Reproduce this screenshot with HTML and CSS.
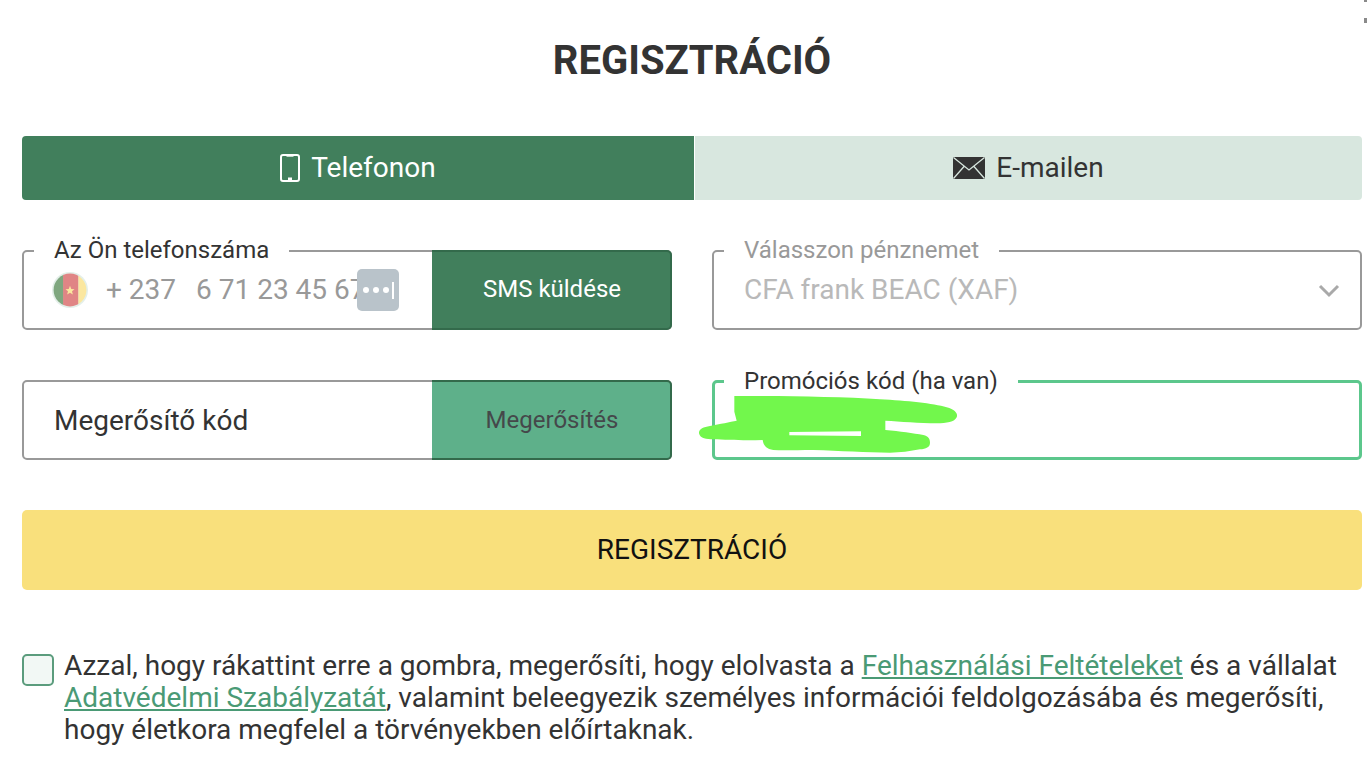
FILE: index.html
```html
<!DOCTYPE html>
<html lang="hu">
<head>
<meta charset="utf-8">
<title>Regisztráció</title>
<link rel="stylesheet" href="styles.css">
</head>
<body>
<div class="corner-mark corner-mark-a"></div>
<div class="corner-mark corner-mark-b"></div>
<main class="page">
  <h1 class="title">REGISZTRÁCIÓ</h1>
  <div class="tabs">
    <button class="tab tab-active" type="button">
      <svg class="icon-phone" viewBox="0 0 20 28" aria-hidden="true"><rect x="1" y="1" width="18" height="26" rx="2" fill="none" stroke="currentColor" stroke-width="2"/><rect x="6.5" y="1.5" width="7" height="1.2" fill="currentColor"/><rect x="8" y="23.5" width="4" height="3" fill="currentColor"/></svg>
      <span>Telefonon</span>
    </button>
    <button class="tab tab-idle" type="button">
      <svg class="icon-mail" viewBox="0 0 32 22" aria-hidden="true"><rect width="32" height="22" rx="1" fill="#333"/><path d="M0.5 0.5 L16 13 L31.5 0.5 M0.5 21.5 L11 9.5 M31.5 21.5 L21 9.5" fill="none" stroke="#d8e7df" stroke-width="1.3"/></svg>
      <span>E-mailen</span>
    </button>
  </div>
  <div class="form-grid">
    <div class="field">
      <span class="field-label">Az Ön telefonszáma</span>
      <div class="phone-value">
        <svg class="flag" viewBox="0 0 34 34" aria-hidden="true"><circle cx="17" cy="17" r="17" fill="#e3efe9"/><clipPath id="fc"><circle cx="17" cy="17" r="15.5"/></clipPath><g clip-path="url(#fc)"><rect width="11" height="34" x="0" fill="#7fa77f"/><rect width="14.5" height="34" x="10.5" fill="#e08585"/><rect width="10" height="34" x="25" fill="#fbe79f"/></g><path d="M17 13 L18.2 16 L21.3 16.2 L18.9 18.2 L19.7 21.2 L17 19.5 L14.3 21.2 L15.1 18.2 L12.7 16.2 L15.8 16 Z" fill="#fbe79f"/></svg>
        <span class="dial">+ 237</span>
        <span class="number">6 71 23 45 67</span>
      </div>
      <div class="keyboard-tile" aria-hidden="true"><i></i><i></i><i></i><b></b></div>
      <button class="side-btn side-btn-dark" type="button">SMS küldése</button>
    </div>
    <div class="field field-muted">
      <span class="field-label field-label-muted">Válasszon pénznemet</span>
      <div class="select-value">CFA frank BEAC (XAF)</div>
      <svg class="chevron" viewBox="0 0 22 14" aria-hidden="true"><path d="M2 2 L11 11 L20 2" fill="none" stroke="#a9a9a9" stroke-width="3"/></svg>
    </div>
    <div class="field">
      <div class="code-value">Megerősítő kód</div>
      <button class="side-btn side-btn-light" type="button">Megerősítés</button>
    </div>
    <div class="field field-promo">
      <span class="field-label">Promóciós kód (ha van)</span>
      <svg class="scribble" viewBox="0 0 960 300" aria-hidden="true"><path d="M163 78 C300 78 480 80 600 88 C680 92 760 100 800 112 C828 120 834 132 830 142 C824 156 800 160 770 160 C720 160 660 154 616 152 L616 180 C660 184 700 190 730 195 C746 198 750 208 750 218 C750 232 738 236 720 238 C690 244 660 248 630 248 C560 248 480 242 400 240 C350 240 310 242 280 240 C262 238 250 228 248 210 C200 212 140 210 100 208 C80 208 60 206 57 190 C56 176 70 172 90 168 C120 162 150 156 170 152 L163 125 Z" fill="#72f74c"/><path d="M328 186 L543 184 L543 198 L328 196 Z" fill="#fff"/></svg>
    </div>
  </div>
  <button class="submit" type="button">REGISZTRÁCIÓ</button>
  <div class="consent">
    <span class="checkbox"></span>
    <p class="consent-text">Azzal, hogy rákattint erre a gombra, megerősíti, hogy elolvasta a <a href="#">Felhasználási Feltételeket</a> és a vállalat <a href="#">Adatvédelmi Szabályzatát</a>, valamint beleegyezik személyes információi feldolgozásába és megerősíti, hogy életkora megfelel a törvényekben előírtaknak.</p>
  </div>
</main>
</body>
</html>
```
FILE: styles.css
```css
* { box-sizing: border-box; }
html, body { margin: 0; height: 100%; background: #fff; overflow: hidden; }
body { font-family: Roboto, "Liberation Sans", sans-serif; color: #333; position: relative; }
.page { padding: 0 5px 0 22px; display: flex; flex-direction: column; }
.title { margin: 0; height: 136px; padding-top: 39px; text-align: center; font-size: 40px; line-height: 44px; font-weight: 700; color: #333; }
.tabs { display: grid; grid-template-columns: 672px 667px; gap: 1px; height: 64px; }
.tab { border: 0; border-radius: 0; display: flex; align-items: center; justify-content: center; gap: 11px; font: 400 28px/32px Roboto, sans-serif; padding: 0; }
.tab-active { background: #417f5c; color: #fff; border-radius: 4px 0 0 4px; }
.tab-idle { background: #d8e7df; color: #333; border-radius: 0 4px 4px 0; }
.icon-phone { width: 20px; height: 28px; }
.icon-mail { width: 32px; height: 22px; }
.form-grid { display: grid; grid-template-columns: 650px 650px; column-gap: 40px; row-gap: 50px; margin-top: 50px; }
.field { position: relative; height: 80px; border: 2px solid #999; border-radius: 5px; display: flex; align-items: center; background: #fff; }
.field-promo { border: 3px solid #5cc78c; }
.field-label { position: absolute; left: 10px; top: -15px; padding: 0 20px; background: #fff; font-size: 24px; line-height: 26px; color: #333; }
.field-promo .field-label { left: 9px; top: -15px; }
.field-label-muted { color: #999; }
.phone-value { display: flex; align-items: center; width: 408px; padding-left: 28px; font-size: 28px; color: #999; overflow: hidden; }
.flag { width: 36px; height: 36px; flex: none; }
.dial { margin-left: 18px; padding-bottom: 2px; }
.number { margin-left: 20px; padding-bottom: 2px; white-space: nowrap; }
.keyboard-tile { position: absolute; left: 333px; top: 17px; width: 42px; height: 42px; border-radius: 5px; background: #b9c3ca; display: flex; align-items: center; justify-content: center; gap: 4px; }
.keyboard-tile i { width: 6px; height: 6px; border-radius: 50%; background: #fff; }
.keyboard-tile b { width: 2px; height: 17px; background: #fff; margin-left: -1px; }
.side-btn { align-self: stretch; margin: -2px -2px -2px auto; width: 240px; border: 2px solid #336a4b; border-left: 0; border-radius: 0 5px 5px 0; font: 400 24px/28px Roboto, sans-serif; padding: 0 0 0 2px; }
.side-btn-dark { background: #417f5c; color: #fff; padding-bottom: 2px; }
.side-btn-light { background: #5eb08a; color: #45484a; }
.select-value { padding: 0 0 2px 30px; font-size: 28px; color: #b9b9b9; }
.chevron { position: absolute; right: 20px; top: 32px; width: 22px; height: 14px; }
.code-value { padding-left: 30px; font-size: 28px; color: #333; }
.scribble { position: absolute; left: -35px; top: -13px; width: 320px; height: 100px; }
.submit { margin-top: 50px; height: 80px; width: 100%; border: 0; border-radius: 5px; background: #f9e07c; color: #111; font: 400 28px/32px Roboto, sans-serif; padding: 0; }
.consent { display: flex; gap: 10px; margin-top: 60px; }
.checkbox { flex: none; width: 32px; height: 32px; margin-top: 4px; border: 2px solid #5b9c7d; border-radius: 5px; background: #f2f8f5; }
.consent-text { margin: 0; font-size: 28px; line-height: 32px; color: #333; }
.consent-text a { color: #4a9a75; text-decoration: underline; }
.corner-mark { position: absolute; left: 1364px; width: 3px; height: 5px; background: #8a8a8a; }
.corner-mark-a { top: 0; height: 2px; }
.corner-mark-b { top: 18px; height: 5px; }
```
